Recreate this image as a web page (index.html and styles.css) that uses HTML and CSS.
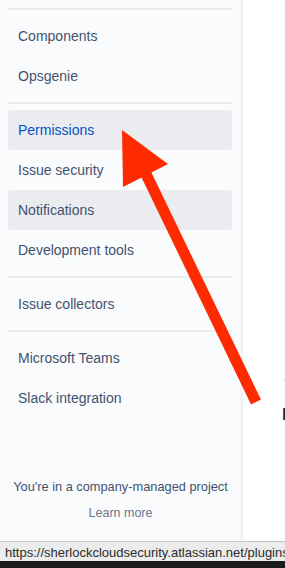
FILE: index.html
```html
<!DOCTYPE html>
<html lang="en">

<head>
    <meta charset="UTF-8">
    <meta name="viewport" content="width=device-width, initial-scale=1.0">
    <title>Project settings - Permissions</title>

    <link rel="stylesheet" href="styles.css">
</head>

<body>
    <div class="page">
        <nav class="sidebar">
            <div class="nav-list">
                <div class="nav-divider"></div>
                <a class="nav-item" href="#">Components</a>
                <a class="nav-item" href="#">Opsgenie</a>
                <div class="nav-divider"></div>
                <a class="nav-item nav-item-selected" href="#">Permissions</a>
                <a class="nav-item" href="#">Issue security</a>
                <a class="nav-item nav-item-hover" href="#">Notifications</a>
                <a class="nav-item" href="#">Development tools</a>
                <div class="nav-divider"></div>
                <a class="nav-item" href="#">Issue collectors</a>
                <div class="nav-divider"></div>
                <a class="nav-item" href="#">Microsoft Teams</a>
                <a class="nav-item" href="#">Slack integration</a>
            </div>

            <div class="sidebar-footer">
                <p>You're in a company-managed project</p>
                <a href="#">Learn more</a>
            </div>
        </nav>

        <main class="content">
            <div class="content-rule"></div>
            <h1 class="content-title">Issue types</h1>
        </main>
    </div>

    <div class="desktop"></div>

    <!-- browser status bar shown while hovering a link -->
    <div class="status-bar">https://sherlockcloudsecurity.atlassian.net/plugins/servlet/project-config</div>

    <!-- markup arrow drawn over the screenshot -->
    <svg class="annotation" viewBox="0 0 285 568" width="285" height="568">
        <line x1="146" y1="174" x2="256" y2="402" stroke="#fe2a00" stroke-width="11" />
        <polygon points="122,130 168,164 123,187" fill="#fe2a00" />
    </svg>
</body>

</html>
```

FILE: styles.css
```css
html,
body {
    margin: 0;
    padding: 0;
}

body {
    width: 285px;
    height: 568px;
    overflow: hidden;
    position: relative;
    font-family: "Liberation Sans", Arial, sans-serif;
    background-color: #1c1c1c;
}

.page {
    display: flex;
    height: 561px;
    background-color: #ffffff;
}

.sidebar {
    width: 241px;
    flex-shrink: 0;
    display: flex;
    flex-direction: column;
    background-color: #fafbfc;
    border-right: 1px solid #ebecf0;
    box-shadow: 1px 0 1px rgba(9, 30, 66, 0.04);
}

.nav-list {
    display: flex;
    flex-direction: column;
    padding: 2px 9px 0 8px;
}

.nav-divider {
    height: 2px;
    margin: 6px 0;
    background-color: #ebecf0;
}

.nav-item {
    display: flex;
    align-items: center;
    height: 40px;
    padding: 0 10px;
    border-radius: 3px;
    font-size: 14px;
    color: #42526e;
    text-decoration: none;
}

.nav-item-selected {
    background-color: #ebecf0;
    color: #0052cc;
}

.nav-item-hover {
    background-color: #ebecf0;
}

.sidebar-footer {
    margin-top: auto;
    padding-bottom: 38px;
    display: flex;
    flex-direction: column;
    align-items: center;
    gap: 8px;
}

.sidebar-footer p {
    margin: 0;
    font-size: 12.8px;
    line-height: 16px;
    color: #42526e;
}

.sidebar-footer a {
    line-height: 20px;
    font-size: 12.5px;
    color: #6b778c;
    text-decoration: none;
}

.content {
    flex: 1;
    overflow: hidden;
    padding: 380px 0 0 40px;
}

.content-rule {
    height: 1px;
    background-color: #dfe1e6;
}

.content-title {
    margin: 24px 0 0;
    font-size: 17px;
    line-height: 20px;
    font-weight: 600;
    color: #172b4d;
    white-space: nowrap;
}

.desktop {
    height: 7px;
    background-color: #1c1c1c;
}

.status-bar {
    position: absolute;
    left: 0;
    top: 541px;
    width: 300px;
    height: 20px;
    box-sizing: border-box;
    padding: 3px 0 0 5px;
    background-color: #ececec;
    border-top: 1px solid #c4c4c4;
    font-size: 13px;
    color: #2b2b2b;
    white-space: nowrap;
    overflow: hidden;
}

.annotation {
    position: absolute;
    left: 0;
    top: 0;
}
```
